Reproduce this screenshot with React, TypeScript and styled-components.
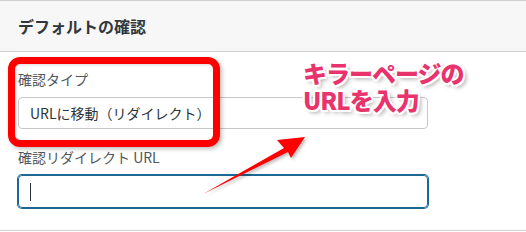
import styled, { createGlobalStyle } from "styled-components";

const GlobalStyle = createGlobalStyle`
  html, body {
    margin: 0;
    padding: 0;
    background: #ffffff;
  }
  body {
    font-family: "Noto Sans CJK JP", "Noto Sans", sans-serif;
    color: #2c3338;
  }
`;

const Panel = styled.div`
  position: relative;
  width: 526px;
  height: 231px;
  box-sizing: border-box;
  border-top: 1px solid #d0d0d0;
  border-bottom: 1px solid #d0d0d0;
  overflow: hidden;
`;

const PanelHeader = styled.div`
  height: 51px;
  box-sizing: border-box;
  background: #f7f7f7;
  border-bottom: 1px solid #cfcfcf;
  display: flex;
  align-items: center;
  padding: 0 18px;
`;

const PanelTitle = styled.h2`
  margin: 0;
  font-size: 16px;
  font-weight: 700;
  color: #32373c;
`;

const PanelBody = styled.div`
  display: flex;
  flex-direction: column;
  padding: 17px 18px 0;
`;

const Field = styled.div<{ $gap?: number }>`
  display: flex;
  flex-direction: column;
  gap: 8px;
  margin-bottom: ${(p) => p.$gap ?? 0}px;
`;

const Label = styled.label`
  font-size: 14px;
  line-height: 20px;
  color: #50575e;
`;

const SelectBox = styled.div`
  width: 410px;
  height: 32px;
  box-sizing: border-box;
  border: 1px solid #c8c8c8;
  border-radius: 4px;
  display: flex;
  align-items: center;
  padding: 0 11px;
  font-size: 14px;
  color: #2c3338;
`;

const TextInput = styled.div`
  width: 410px;
  height: 33px;
  box-sizing: border-box;
  border: 1px solid #1c6894;
  box-shadow: 0 0 0 1px #1c6894;
  border-radius: 4px;
  display: flex;
  align-items: center;
  padding: 0 11px;
`;

const Caret = styled.span`
  display: block;
  width: 1px;
  height: 18px;
  background: #2c3338;
`;

const Highlight = styled.div`
  position: absolute;
  left: 8px;
  top: 56px;
  width: 212px;
  height: 90px;
  box-sizing: border-box;
  border: 7px solid #ff0000;
  border-radius: 12px;
  box-shadow: 2px 2px 4px rgba(0, 0, 0, 0.25), inset 1px 1px 3px rgba(0, 0, 0, 0.15);
`;

const Callout = styled.div`
  position: absolute;
  left: 303px;
  top: 58px;
  display: flex;
  flex-direction: column;
  font-family: "Noto Sans CJK JP", sans-serif;
  font-weight: 900;
  font-size: 24px;
  line-height: 27px;
  color: #e8336d;
  letter-spacing: -1px;
  text-shadow:
    2px 0 0 #fff, -2px 0 0 #fff, 0 2px 0 #fff, 0 -2px 0 #fff,
    1.5px 1.5px 0 #fff, -1.5px -1.5px 0 #fff, 1.5px -1.5px 0 #fff, -1.5px 1.5px 0 #fff,
    3px 3px 4px rgba(0, 0, 0, 0.35);
`;

const CalloutLine = styled.span`
  display: block;
  white-space: nowrap;
`;

const ArrowLayer = styled.svg`
  position: absolute;
  left: 0;
  top: 0;
  pointer-events: none;
`;

export default function App() {
  return (
    <>
      <GlobalStyle />
      <Panel>
        <PanelHeader>
          <PanelTitle>デフォルトの確認</PanelTitle>
        </PanelHeader>
        <PanelBody>
          <Field $gap={18}>
            <Label>確認タイプ</Label>
            <SelectBox>URLに移動（リダイレクト）</SelectBox>
          </Field>
          <Field>
            <Label>確認リダイレクト URL</Label>
            <TextInput>
              <Caret />
            </TextInput>
          </Field>
        </PanelBody>
        <Highlight />
        <Callout>
          <CalloutLine>キラーページの</CalloutLine>
          <CalloutLine>URLを入力</CalloutLine>
        </Callout>
        <ArrowLayer width="526" height="232" viewBox="0 0 526 232">
          <defs>
            <filter id="sh" x="-20%" y="-20%" width="140%" height="140%">
              <feDropShadow dx="2" dy="2" stdDeviation="1.5" floodColor="#000" floodOpacity="0.25" />
            </filter>
          </defs>
          <polygon
            points="203,193 284,147 277,139 305,136 291,157 288,151"
            fill="#ff0000"
            filter="url(#sh)"
          />
        </ArrowLayer>
      </Panel>
    </>
  );
}
